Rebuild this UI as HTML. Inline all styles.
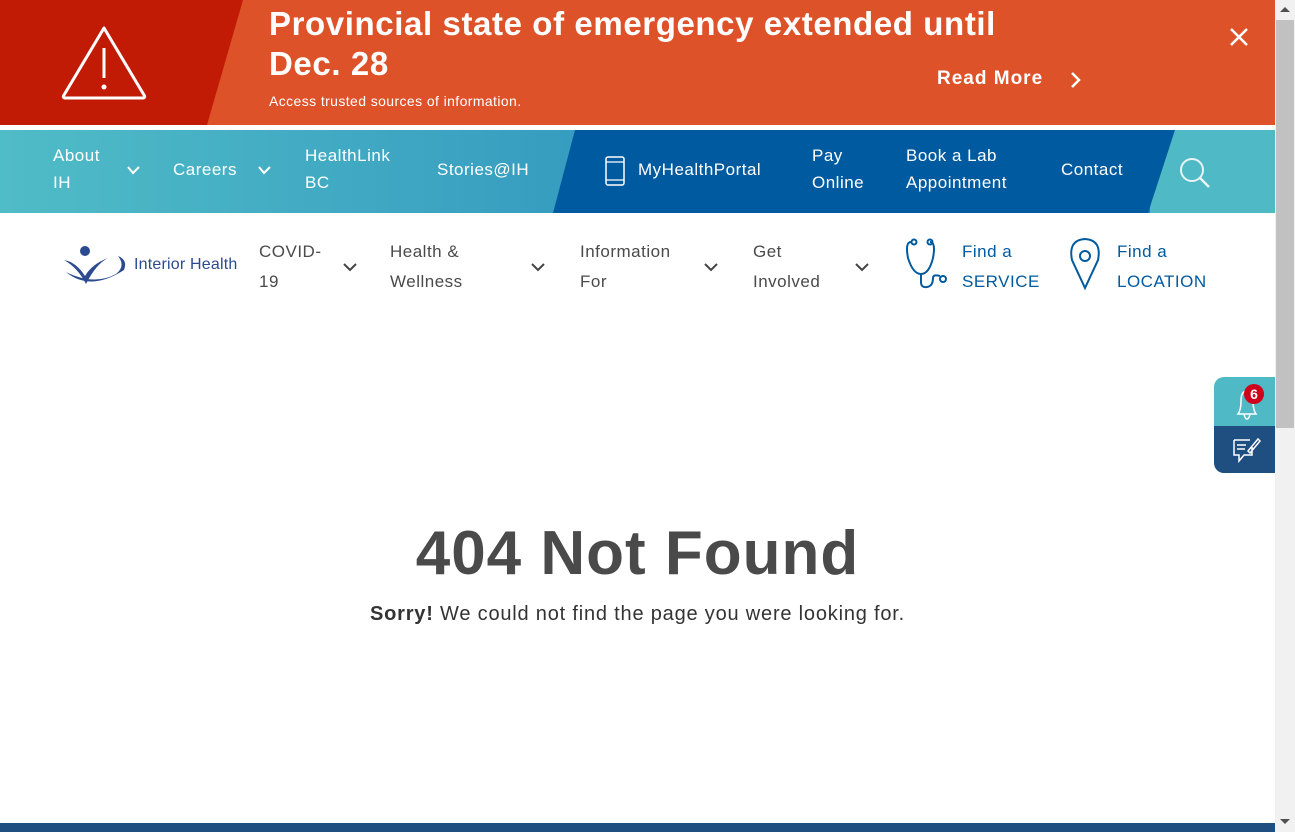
<!DOCTYPE html>
<html><head><meta charset="utf-8"><style>
*{margin:0;padding:0;box-sizing:border-box}
body{width:1295px;height:832px;overflow:hidden;background:#fff;font-family:"Liberation Sans",sans-serif;position:relative}
.abs{position:absolute}
.w{color:#fff}
.nav{font-size:17px;line-height:27px;color:#fff;letter-spacing:.5px}
.mn{font-size:17px;line-height:30px;color:#4a4a4a;letter-spacing:.5px}
.bl{font-size:17px;line-height:30px;color:#005a9f;letter-spacing:.5px}
</style></head><body>
<svg class="abs" style="left:0;top:0" width="1275" height="213">
<rect width="1275" height="125" fill="#de522a"/>
<polygon points="0,0 243,0 207,125 0,125" fill="#c11b06"/>
<defs><linearGradient id="g" x1="0" x2="1"><stop offset="0" stop-color="#50bcc7"/><stop offset="1" stop-color="#1876b8"/></linearGradient></defs>
<rect y="130" width="1275" height="83" fill="url(#g)"/>
<rect x="1150" y="130" width="125" height="83" fill="#4fb9c6"/>
<polygon points="575,130 1175,130 1148,213 553,213" fill="#005a9f"/>
<path d="M104,28 L64,95 Q62,98 66,98 L142,98 Q146,98 144,95 Z" fill="none" stroke="#fff" stroke-width="3" stroke-linejoin="round"/>
<line x1="104" y1="48" x2="104" y2="78" stroke="#fff" stroke-width="3"/>
<circle cx="104" cy="87" r="2.5" fill="#fff"/>
<path d="M1231,29 L1247,45 M1247,29 L1231,45" stroke="#fff" stroke-width="2.5"/>
<path d="M1072,73 L1079,80 L1072,87" fill="none" stroke="#fff" stroke-width="2.5"/>
<path d="M128,167 L133,173 L139,167 M259,167 L264,173 L270,167" fill="none" stroke="#fff" stroke-width="2"/>
<rect x="606" y="157" width="18" height="28" rx="2" fill="none" stroke="#fff" stroke-width="1.5"/>
<line x1="606" y1="162" x2="624" y2="162" stroke="#fff" stroke-width="1.2"/><line x1="606" y1="180" x2="624" y2="180" stroke="#fff" stroke-width="1.2"/>
<circle cx="1192" cy="170" r="11" fill="none" stroke="#e8f4f6" stroke-width="2"/>
<line x1="1200" y1="178" x2="1209" y2="187" stroke="#e8f4f6" stroke-width="2.5"/>
</svg>
<div class="abs w" style="left:269px;top:4px;font-size:33px;font-weight:bold;line-height:40px;width:790px;letter-spacing:.6px">Provincial state of emergency extended until Dec. 28</div>
<div class="abs w" style="left:269px;top:93px;font-size:14px;letter-spacing:.4px">Access trusted sources of information.</div>
<div class="abs w" style="left:937px;top:68px;font-size:19px;font-weight:bold;letter-spacing:1px">Read More</div>
<div class="abs nav" style="left:53px;top:142px">About<br>IH</div>
<div class="abs nav" style="left:173px;top:156px">Careers</div>
<div class="abs nav" style="left:305px;top:142px">HealthLink<br>BC</div>
<div class="abs nav" style="left:437px;top:156px">Stories@IH</div>
<div class="abs nav" style="left:638px;top:156px">MyHealthPortal</div>
<div class="abs nav" style="left:812px;top:142px">Pay<br>Online</div>
<div class="abs nav" style="left:906px;top:142px">Book a Lab<br>Appointment</div>
<div class="abs nav" style="left:1061px;top:156px">Contact</div>
<svg class="abs" style="left:60px;top:240px" width="70" height="50">
<circle cx="25" cy="11" r="5" fill="#2b4a8f"/>
<path d="M4,20 Q16,22 25,36 Q32,24 48,18 Q36,24 26,44 Q18,28 4,20Z" fill="#2b4a8f"/>
<path d="M6,32 Q30,52 64,30 Q68,20 58,16 Q66,26 56,34 Q34,46 6,32Z" fill="#2b4a8f"/>
</svg>
<div class="abs" style="left:134px;top:256px;font-size:16px;color:#2b4a8f;letter-spacing:.2px">Interior Health</div>
<div class="abs mn" style="left:259px;top:237px">COVID-<br>19</div>
<div class="abs mn" style="left:390px;top:237px">Health &amp;<br>Wellness</div>
<div class="abs mn" style="left:580px;top:237px">Information<br>For</div>
<div class="abs mn" style="left:753px;top:237px">Get<br>Involved</div>
<div class="abs bl" style="left:962px;top:237px">Find a<br>SERVICE</div>
<div class="abs bl" style="left:1117px;top:237px">Find a<br>LOCATION</div>
<svg class="abs" style="left:0;top:230px" width="1275" height="70">
<g fill="none" stroke="#444" stroke-width="2"><path d="M344,34 L350,40 L356,34 M532,34 L538,40 L544,34 M705,34 L711,40 L717,34 M856,34 L862,40 L868,34"/></g>
<g fill="none" stroke="#005a9f" stroke-width="2"><path d="M911,12 Q905,12 908,28 Q913,44 921,44 Q929,44 933,28 Q936,12 930,12"/><circle cx="914" cy="12" r="2.5"/><circle cx="930" cy="12" r="2.5"/><path d="M921,44 L921,52 Q921,58 927,57 Q933,56 933,48 Q933,44 940,46"/><circle cx="943" cy="49" r="3"/>
<path d="M1085,58 L1072,30 Q1068,10 1085,9 Q1102,10 1098,30 Z"/><circle cx="1085" cy="26" r="5"/></g>
</svg>
<div class="abs" style="left:0;top:518px;width:1275px;text-align:center;font-size:62px;font-weight:bold;color:#4a4a4a;letter-spacing:1px">404 Not Found</div>
<div class="abs" style="left:0;top:603px;width:1275px;text-align:center;font-size:20px;color:#333;letter-spacing:.8px"><b>Sorry!</b> We could not find the page you were looking for.</div>
<div class="abs" style="left:1214px;top:377px;width:61px;height:49px;background:#4fb9c6;border-radius:10px 0 0 0"></div>
<div class="abs" style="left:1214px;top:426px;width:61px;height:47px;background:#1f4e80;border-radius:0 0 0 10px"></div>
<svg class="abs" style="left:1214px;top:377px" width="61" height="96">
<path d="M24,37 Q27,33 27,24 Q27,14 33,14 Q39,14 39,24 Q39,33 42,37 Z M30,37 Q31,42 33,42 Q35,42 36,37" fill="none" stroke="#fff" stroke-width="1.5"/>
<circle cx="40" cy="17" r="10" fill="#d0021b"/><text x="40" y="22" font-size="14" font-weight="bold" fill="#fff" text-anchor="middle" font-family="Liberation Sans">6</text>
<path d="M20,63 L36,63 M20,63 L20,78 L25,78 L25,84 L30,78 L38,78 L38,70 M23,68 L32,68 M23,72 L31,72 M34,74 L44,62 L46,64 L36,76 Z" fill="none" stroke="#fff" stroke-width="1.5"/>
</svg>
<div class="abs" style="left:1275px;top:0;width:20px;height:832px;background:#f1f1f1"></div>
<div class="abs" style="left:1276px;top:20px;width:18px;height:408px;background:#c1c1c1"></div>
<div class="abs" style="left:1280px;top:7px;width:0;height:0;border-left:5px solid transparent;border-right:5px solid transparent;border-bottom:5px solid #505050"></div>
<div class="abs" style="left:1280px;top:819px;width:0;height:0;border-left:5px solid transparent;border-right:5px solid transparent;border-top:5px solid #505050"></div>
<div class="abs" style="left:0;top:823px;width:1275px;height:9px;background:#1f4e80"></div>
</body></html>
